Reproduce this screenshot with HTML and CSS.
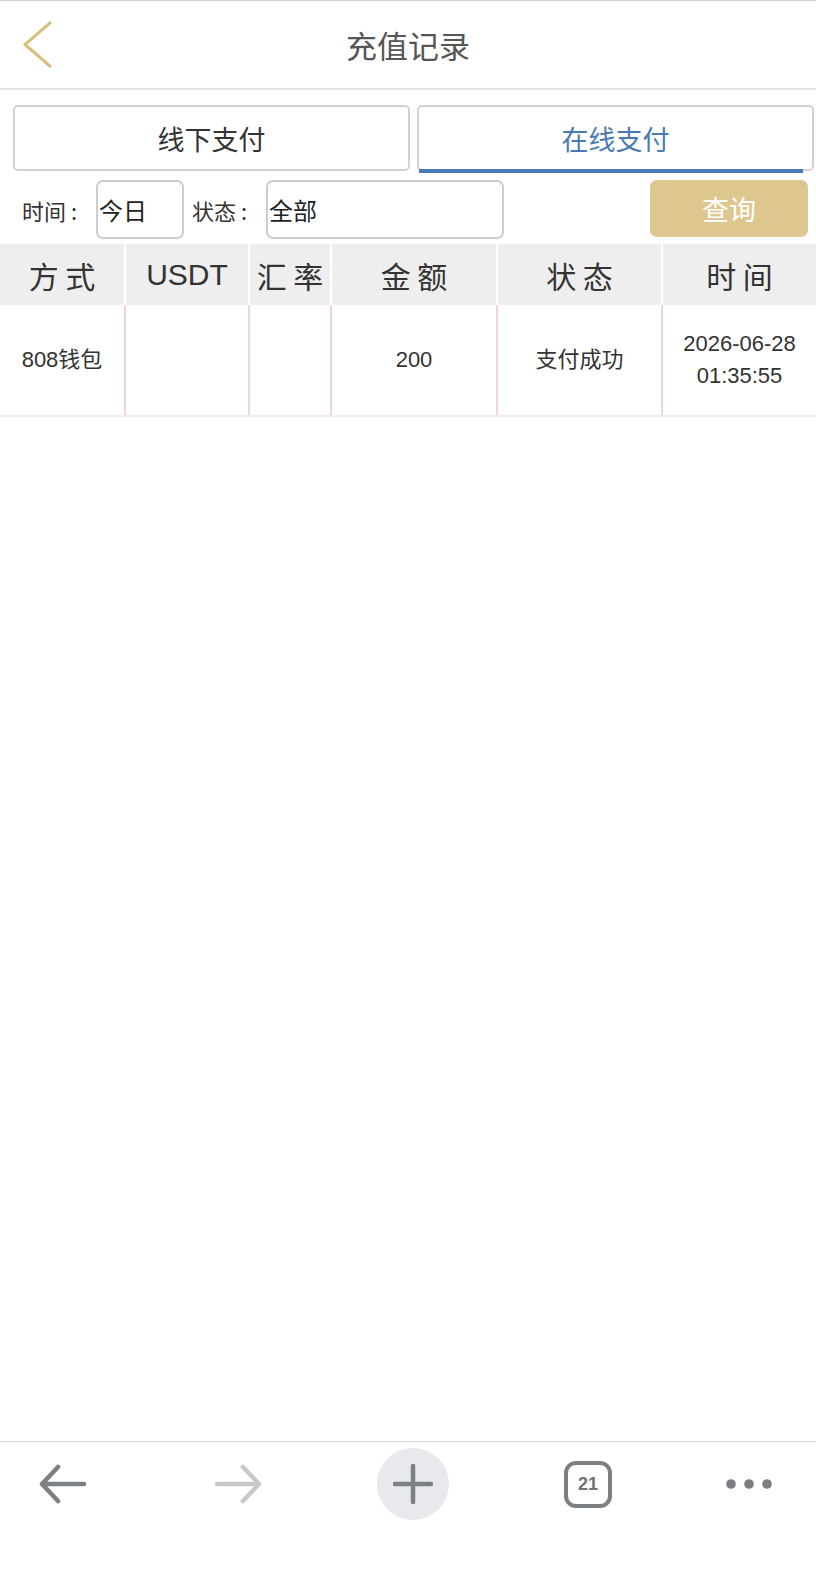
FILE: index.html
```html
<!DOCTYPE html>
<html lang="zh-CN">
<head>
    <meta charset="UTF-8">
    <meta name="viewport" content="width=device-width, initial-scale=1.0">
    <title>充值记录</title>
    <link rel="stylesheet" href="styles.css">
</head>
<body>
    <div class="page">
        <header class="topbar">
            <a class="back" href="#">
                <svg width="30" height="48" viewBox="0 0 30 48">
                    <polyline points="28,1 2,23.5 28,46" fill="none" stroke="#d7bf7d" stroke-width="3"/>
                </svg>
            </a>
            <h1>充值记录</h1>
            <span></span>
        </header>

        <div class="tabs">
            <div class="tab">线下支付</div>
            <div class="tab active">在线支付</div>
        </div>

        <div class="filter">
            <label>时间 :</label>
            <div class="select day">今日</div>
            <label>状态 :</label>
            <div class="select status">全部</div>
            <button class="query">查询</button>
        </div>

        <table class="records">
            <colgroup>
                <col style="width:125px">
                <col style="width:124px">
                <col style="width:82px">
                <col style="width:166px">
                <col style="width:165px">
                <col style="width:154px">
            </colgroup>
            <thead>
                <tr>
                    <th>方 式</th>
                    <th class="latin">USDT</th>
                    <th>汇 率</th>
                    <th>金 额</th>
                    <th>状 态</th>
                    <th>时 间</th>
                </tr>
            </thead>
            <tbody>
                <tr>
                    <td>808钱包</td>
                    <td></td>
                    <td></td>
                    <td>200</td>
                    <td>支付成功</td>
                    <td>2026-06-28<br>01:35:55</td>
                </tr>
            </tbody>
        </table>
    </div>

    <!-- browser toolbar -->
    <nav class="browser-bar">
        <div class="nav-item">
            <svg width="48" height="40" viewBox="0 0 48 40">
                <path d="M45 20 H3 M19 3 L3 20 L19 37" fill="none" stroke="#7b8085" stroke-width="4.5" stroke-linecap="round" stroke-linejoin="round"/>
            </svg>
        </div>
        <div class="nav-item">
            <svg width="48" height="40" viewBox="0 0 48 40">
                <path d="M3 20 H45 M29 3 L45 20 L29 37" fill="none" stroke="#c8c8c8" stroke-width="4.5" stroke-linecap="round" stroke-linejoin="round"/>
            </svg>
        </div>
        <div class="nav-item nav-plus">
            <svg width="40" height="40" viewBox="0 0 40 40">
                <path d="M20 2 V38 M2 20 H38" fill="none" stroke="#7b8085" stroke-width="4.5" stroke-linecap="round"/>
            </svg>
        </div>
        <div class="nav-item">
            <div class="tab-count">21</div>
        </div>
        <div class="nav-item nav-more">
            <svg width="46" height="12" viewBox="0 0 46 12">
                <circle cx="5" cy="6" r="4.8" fill="#7b8085"/>
                <circle cx="23" cy="6" r="4.8" fill="#7b8085"/>
                <circle cx="41" cy="6" r="4.8" fill="#7b8085"/>
            </svg>
        </div>
    </nav>
</body>
</html>
```

FILE: styles.css
```css
/* Reset */
* {
    margin: 0;
    padding: 0;
    box-sizing: border-box;
}

html, body {
    height: 100%;
}

body {
    font-family: "Noto Sans CJK SC", "Liberation Sans", sans-serif;
    color: #333;
    background: #fff;
    display: flex;
    flex-direction: column;
    min-height: 100vh;
}

.page {
    flex: 1;
}

/* Top bar */
.topbar {
    height: 90px;
    border-top: 1px solid #cfcfcf;
    border-bottom: 2px solid #e6e6e6;
    display: grid;
    grid-template-columns: 1fr auto 1fr;
    align-items: center;
}

.back {
    display: flex;
    padding-left: 23px;
}

.topbar h1 {
    font-size: 31px;
    font-weight: normal;
    line-height: 1;
    color: #555;
}

/* Tabs */
.tabs {
    display: flex;
    gap: 7px;
    padding: 15px 2px 0 13px;
}

.tab {
    flex: 1;
    height: 66px;
    border: 2px solid #d2d2d2;
    border-radius: 5px;
    display: flex;
    align-items: center;
    justify-content: center;
    font-size: 27px;
    color: #333;
    position: relative;
}

.tab.active {
    color: #4a7ab6;
}

.tab.active::after {
    content: "";
    position: absolute;
    left: 0;
    right: 9px;
    bottom: -4px;
    height: 4px;
    background: #4a7ab6;
}

/* Filter row */
.filter {
    display: flex;
    align-items: center;
    gap: 8px;
    height: 59px;
    margin-top: 9px;
    padding: 0 8px 0 22px;
}

.filter label {
    font-size: 22px;
    color: #333;
    padding-right: 11px;
}

.select {
    height: 59px;
    border: 2px solid #cccccc;
    border-radius: 7px;
    display: flex;
    align-items: center;
    padding-left: 1px;
    font-size: 24px;
    color: #222;
}

.select.day {
    width: 88px;
}

.select.status {
    width: 238px;
}

.query {
    margin-left: auto;
    width: 158px;
    height: 57px;
    border: none;
    border-radius: 7px;
    background: #ddc78e;
    color: #fff;
    font-family: "Noto Sans CJK SC", sans-serif;
    font-size: 27px;
    align-self: flex-start;
}

/* Records table */
.records {
    width: 100%;
    margin-top: 5px;
    border-collapse: collapse;
    table-layout: fixed;
}

.records th {
    height: 61px;
    background: #eeeeee;
    font-size: 30px;
    font-weight: normal;
    color: #333;
    border-left: 2px solid #fff;
    white-space: nowrap;
}

.records th.latin {
    font-family: "Liberation Sans", sans-serif;
}

.records td {
    height: 111px;
    font-size: 22px;
    line-height: 32px;
    text-align: center;
    color: #333;
    border-left: 2px solid #f0d4d9;
    border-bottom: 2px solid #eeeeee;
    font-family: "Liberation Sans", "Noto Sans CJK SC", sans-serif;
}

.records th:first-child,
.records td:first-child {
    border-left: none;
}

/* Browser toolbar */
.browser-bar {
    height: 155px;
    border-top: 1px solid #d4d4d4;
    display: flex;
    align-items: flex-start;
    gap: 103px;
    padding: 6px 0 0 27px;
}

.nav-item {
    width: 72px;
    height: 72px;
    display: flex;
    align-items: center;
    justify-content: center;
}

.nav-plus {
    border-radius: 50%;
    background: #e8e9ec;
}

.nav-more {
    margin-left: -14px;
}

.tab-count {
    width: 48px;
    height: 47px;
    border: 4px solid #7b8085;
    border-radius: 12px;
    display: flex;
    align-items: center;
    justify-content: center;
    font-family: "Liberation Sans", sans-serif;
    font-weight: bold;
    font-size: 18px;
    color: #6e7378;
}
```
